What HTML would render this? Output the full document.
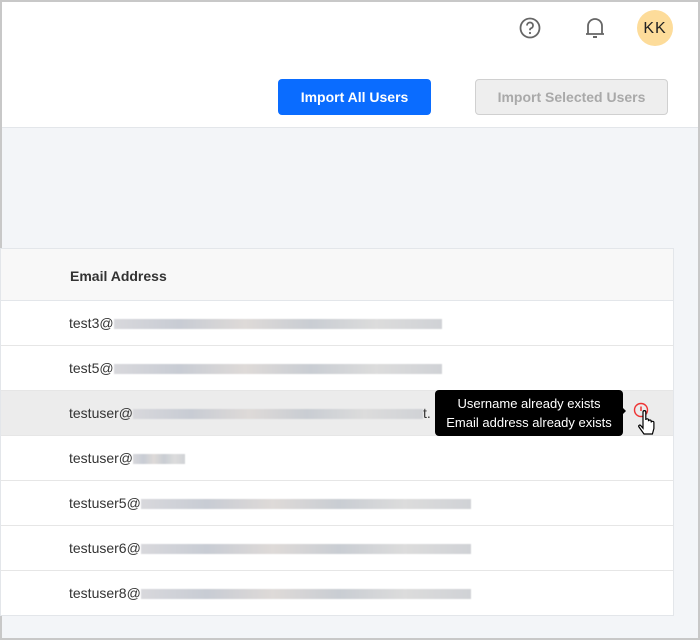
<!DOCTYPE html>
<html><head><style>
*{box-sizing:border-box;margin:0;padding:0}
body{width:700px;height:640px;overflow:hidden;font-family:"Liberation Sans",sans-serif;background:#c8c8c8;position:relative}
.frame{position:absolute;left:2px;top:2px;width:696px;height:636px;background:#f3f5f8}
.hdr{position:absolute;left:0;top:0;width:696px;height:126px;background:#fff;border-bottom:1px solid #e3e6ea}
.btn1{position:absolute;left:276px;top:77px;width:153px;height:36px;background:#0a6cff;color:#fff;border-radius:4px;font-size:14px;font-weight:bold;text-align:center;line-height:36px}
.btn2{position:absolute;left:473px;top:77px;width:193px;height:36px;background:#eeeeee;color:#a9a9a9;border:1px solid #d0d0d0;border-radius:4px;font-size:14px;font-weight:bold;text-align:center;line-height:34px}
.av{position:absolute;left:635px;top:8px;width:36px;height:36px;border-radius:50%;background:#fddc9a;color:#222;font-size:16px;text-align:center;line-height:37px;letter-spacing:1px}
.tbl{position:absolute;left:-2px;top:246px;width:674px;height:368px;background:#fff;border:1px solid #e3e6ea}
.th{height:52px;background:#f8f8f8;border-bottom:1px solid #e3e6ea;font-size:14px;font-weight:bold;color:#333;padding-left:69px;line-height:54px}
.row{height:45px;border-bottom:1px solid #e6e6e6;font-size:14px;color:#333;padding-left:68px;line-height:45px;position:relative}
.row:last-child{border-bottom:none}
.blur{display:inline-block;height:10px;vertical-align:middle;background:linear-gradient(90deg,#d8d8dc,#c8ccd4 20%,#dedad8 40%,#c9cdd3 60%,#dcdcdc 80%,#d0d2d6);filter:blur(.6px)}
.tip{position:absolute;left:433px;top:388px;width:188px;height:46px;background:#000;color:#fff;border-radius:4px;font-size:13px;text-align:center;line-height:19px;padding-top:4px}
.tip:after{content:"";position:absolute;right:-8px;top:16px;border:5px solid transparent;border-left:5px solid #000}
</style></head><body>
<div class="frame">
<div class="hdr">
<svg style="position:absolute;left:517px;top:15px" width="22" height="22" viewBox="0 0 22 22"><circle cx="11" cy="11" r="9.5" fill="none" stroke="#666" stroke-width="1.8"/><path d="M8 8.5a3 3 0 1 1 4 2.8c-.7.3-1 .8-1 1.5v.5" fill="none" stroke="#666" stroke-width="1.8"/><circle cx="11" cy="16" r="1.1" fill="#666"/></svg>
<svg style="position:absolute;left:582px;top:14px" width="22" height="24" viewBox="0 0 22 24"><path d="M4 18V10a7 7 0 0 1 14 0v8M2 18h18" fill="none" stroke="#666" stroke-width="1.8"/><path d="M9 21h4" stroke="#666" stroke-width="2"/></svg>
<div class="av">KK</div>
<div class="btn1">Import All Users</div>
<div class="btn2">Import Selected Users</div>
</div>
<div class="tbl">
<div class="th">Email Address</div>
<div class="row">test3@<span class="blur" style="width:328px"></span></div>
<div class="row">test5@<span class="blur" style="width:328px"></span></div>
<div class="row" style="background:#ececec">testuser@<span class="blur" style="width:290px"></span>t.
<svg style="position:absolute;left:631px;top:10px" width="30" height="36" viewBox="0 0 30 36"><circle cx="9" cy="9" r="6.5" fill="none" stroke="#e33" stroke-width="1.4"/><path d="M9 5.5v4.5" stroke="#e33" stroke-width="1.5"/><path d="M12 33l-5-7c-1-1.4.8-2.6 1.8-1.4l2.2 2.6V11c0-1.8 2.8-1.8 2.8 0v8c0-1.6 2.7-1.6 2.7 0v1.2c0-1.6 2.7-1.6 2.7 0v1.3c0-1.6 2.7-1.6 2.7 0v6l-1.5 5.5z" fill="#fff" stroke="#000" stroke-width="1.2"/></svg>
</div>
<div class="row">testuser@<span class="blur" style="width:52px"></span></div>
<div class="row">testuser5@<span class="blur" style="width:330px"></span></div>
<div class="row">testuser6@<span class="blur" style="width:330px"></span></div>
<div class="row">testuser8@<span class="blur" style="width:330px"></span></div>
</div>
<div class="tip">Username already exists<br>Email address already exists</div>
</div>
</body></html>
